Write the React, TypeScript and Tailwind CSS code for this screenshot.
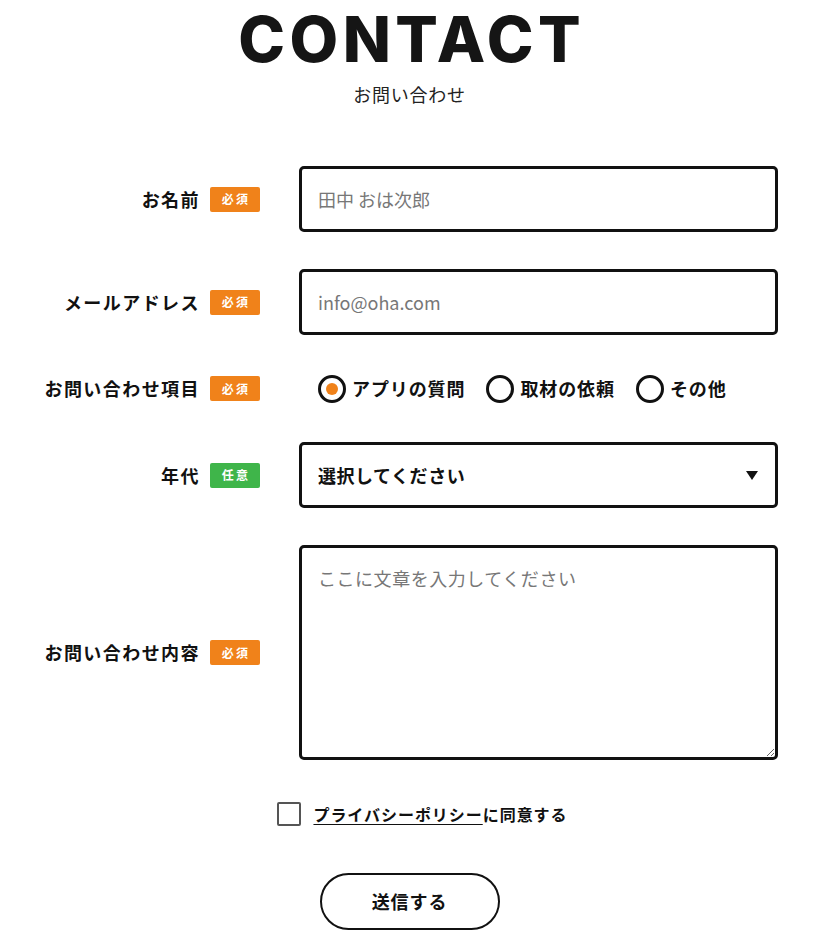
import { useState } from 'react';

const jp = "font-['Noto_Sans_CJK_JP',sans-serif]";

function Badge({ optional }: { optional?: boolean }) {
  return (
    <span
      className={[
        'flex h-[25px] w-[50px] shrink-0 items-center justify-center rounded-[2px] pl-[2px] text-[12px] font-bold tracking-[0.18em] text-white',
        optional ? 'bg-[#3fb54a]' : 'bg-[#f0821a]',
      ].join(' ')}
    >
      {optional ? '任意' : '必須'}
    </span>
  );
}

function Row({
  label,
  optional,
  children,
}: {
  label: string;
  optional?: boolean;
  children: React.ReactNode;
}) {
  return (
    <div className="flex items-center">
      <div className="flex w-[260px] shrink-0 items-center justify-end gap-[10px]">
        <span className="text-[18px] font-bold tracking-[0.08em] text-[#111]">{label}</span>
        <Badge optional={optional} />
      </div>
      <div className="ml-[39px] w-[479px]">{children}</div>
    </div>
  );
}

const boxCls =
  'block h-[66px] w-full rounded-[5px] border-[3px] border-[#111] bg-white px-[16px] text-[18px] text-[#111] outline-none placeholder:text-[#777]';

export default function App() {
  const [kind, setKind] = useState('app');
  const [agree, setAgree] = useState(false);
  const kinds = [
    { id: 'app', label: 'アプリの質問' },
    { id: 'press', label: '取材の依頼' },
    { id: 'other', label: 'その他' },
  ];

  return (
    <div className={`min-h-screen bg-white ${jp}`}>
      <div className="flex flex-col items-center pt-[8px] pr-[20px]">
        <h1 className="pl-[0.07em] font-['Inter',sans-serif] text-[63px] font-extrabold leading-none tracking-[0.07em] text-[#151515]">
          CONTACT
        </h1>
        <p className="mt-[14px] text-[18px] leading-none tracking-[0.04em] text-[#222]">お問い合わせ</p>
      </div>

      <form className="mt-[63px] flex flex-col gap-[37px]" onSubmit={(e) => e.preventDefault()}>
        <Row label="お名前">
          <input className={boxCls} placeholder="田中 おは次郎" />
        </Row>
        <Row label="メールアドレス">
          <input className={boxCls} placeholder="info@oha.com" />
        </Row>
        <Row label="お問い合わせ項目">
          <div className="flex h-[33px] items-center gap-[21px] pl-[19px]">
            {kinds.map((k) => (
              <label key={k.id} className="flex cursor-pointer items-center gap-[6px]" onClick={() => setKind(k.id)}>
                <span className="flex h-[28px] w-[28px] items-center justify-center rounded-full border-[3px] border-[#111]">
                  {kind === k.id ? <span className="h-[12px] w-[12px] rounded-full bg-[#f0821a]" /> : null}
                </span>
                <span className="text-[18px] font-bold tracking-[0.05em] text-[#111]">{k.label}</span>
              </label>
            ))}
          </div>
        </Row>
        <Row label="年代" optional>
          <div className="relative">
            <select className={`${boxCls} appearance-none font-bold tracking-[0.03em]`} defaultValue="">
              <option value="">選択してください</option>
              <option>10代</option>
              <option>20代</option>
              <option>30代</option>
              <option>40代以上</option>
            </select>
            <svg className="pointer-events-none absolute right-[20px] top-[29px]" width="12" height="9" viewBox="0 0 12 9">
              <path d="M0 0h12L6 9z" fill="#111" />
            </svg>
          </div>
        </Row>
        <Row label="お問い合わせ内容">
          <textarea
            className="block h-[215px] w-full resize-y rounded-[5px] border-[3px] border-[#111] px-[16px] pt-[17px] text-[18px] leading-[1.5] tracking-[0.03em] outline-none placeholder:text-[#777]"
            placeholder="ここに文章を入力してください"
          />
        </Row>

        <div className="mt-[5px] flex items-center justify-center gap-[12px] pl-[6px]">
          <span
            onClick={() => setAgree((v) => !v)}
            className="flex h-[24px] w-[24px] cursor-pointer items-center justify-center rounded-[2px] border-2 border-[#555]"
          >
            {agree ? <span className="h-[12px] w-[12px] bg-[#111]" /> : null}
          </span>
          <span className="text-[16px] font-bold tracking-[0.06em] text-[#111]">
            <span className="underline underline-offset-[3px]">プライバシーポリシー</span>に同意する
          </span>
        </div>

        <div className="mt-[10px] flex justify-center pr-[20px]">
          <button
            type="submit"
            className="h-[57px] w-[180px] rounded-full border-2 border-[#111] bg-white text-[18px] font-bold tracking-[0.05em] text-[#111]"
          >
            送信する
          </button>
        </div>
      </form>
    </div>
  );
}
